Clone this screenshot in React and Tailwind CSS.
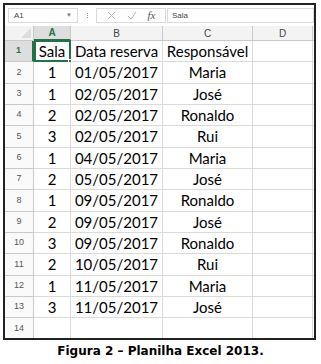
import React from 'react'

const rows = [
  ['Sala', 'Data reserva', 'Responsável'],
  ['1', '01/05/2017', 'Maria'],
  ['1', '02/05/2017', 'José'],
  ['2', '02/05/2017', 'Ronaldo'],
  ['3', '02/05/2017', 'Rui'],
  ['1', '04/05/2017', 'Maria'],
  ['2', '05/05/2017', 'José'],
  ['1', '09/05/2017', 'Ronaldo'],
  ['2', '09/05/2017', 'José'],
  ['3', '09/05/2017', 'Ronaldo'],
  ['2', '10/05/2017', 'Rui'],
  ['1', '11/05/2017', 'Maria'],
  ['3', '11/05/2017', 'José'],
  ['', '', ''],
]

const cellFont = { fontFamily: 'Lato, "Open Sans", sans-serif' }

function FormulaBar() {
  return (
    <div className="h-[21px] flex items-center shrink-0 text-[8px] text-[#444]" style={{ fontFamily: '"Liberation Sans", Arial, sans-serif' }}>
      <div className="ml-[3px] w-[70px] h-[15px] border border-[#dadada] flex items-center justify-between px-[5px]">
        <span>A1</span>
        <span className="text-[6px] text-[#777]">▼</span>
      </div>
      <div className="w-[18px] flex flex-col items-center gap-[1px]">
        <span className="w-[1px] h-[1px] bg-[#999]" />
        <span className="w-[1px] h-[1px] bg-[#999]" />
        <span className="w-[1px] h-[1px] bg-[#999]" />
      </div>
      <div className="w-[70px] h-[15px] border border-[#dadada] flex items-center justify-around px-[4px] text-[#b5b5b5]">
        <svg width="9" height="9" viewBox="0 0 9 9"><path d="M1 1L8 8M8 1L1 8" stroke="#b5b5b5" strokeWidth="1" /></svg>
        <svg width="10" height="9" viewBox="0 0 10 9"><path d="M1 5L4 8L9 1" stroke="#b5b5b5" strokeWidth="1" fill="none" /></svg>
        <span className="italic text-[11px] text-[#555]" style={{ fontFamily: '"Liberation Serif", serif' }}>fx</span>
      </div>
      <div className="ml-[1px] flex-1 h-[15px] border border-[#dadada] flex items-center px-[4px]">
        <span>Sala</span>
      </div>
    </div>
  )
}

export default function App() {
  const headerCell = 'h-[15px] border-r border-b border-[#c9c9c9] bg-[#f3f3f3] flex items-center justify-center text-[10px] text-[#444]'
  return (
    <div className="w-[321px] h-[364px] bg-white">
      <div className="ml-[3px] mt-[3px] w-[313px] h-[337px] border-2 border-[#222] overflow-hidden flex flex-col">
        <FormulaBar />
        <div className="grid grid-cols-[29px_37px_92px_90px_60px_1fr]" style={{ fontFamily: '"Liberation Sans", Arial, sans-serif' }}>
          <div className={headerCell + ' relative'}>
            <div className="absolute right-[2px] bottom-[2px] w-0 h-0 border-l-[10px] border-l-transparent border-b-[10px] border-b-[#dcdcdc]" />
          </div>
          <div className="h-[15px] border-r border-b-2 border-b-[#217346] border-r-[#c9c9c9] bg-[#dedede] flex items-center justify-center text-[10px] font-bold text-[#217346]">A</div>
          <div className={headerCell}>B</div>
          <div className={headerCell}>C</div>
          <div className={headerCell}>D</div>
          <div className="h-[15px] border-b border-[#c9c9c9] bg-[#f3f3f3]" />
          {rows.map((r, i) => {
            const first = i === 0
            return (
              <React.Fragment key={i}>
                <div className={'h-[21.33px] border-b flex items-center justify-center text-[9px] ' + (first ? 'bg-[#dedede] border-r-2 border-r-[#217346] border-b-[#c9c9c9] font-bold text-[#217346]' : 'bg-[#fafafa] border-r border-[#c9c9c9] text-[#555]')}>
                  {i + 1}
                </div>
                <div className="h-[21.33px] border-r border-b border-[#dadada] flex items-center justify-center text-[15px] text-black relative" style={cellFont}>
                  {first && (
                    <div className="absolute inset-[-1px] left-[0px] top-[-1px] border-2 border-[#217346]">
                      <div className="absolute right-[-3px] bottom-[-3px] w-[4px] h-[4px] bg-[#217346] border border-white" />
                    </div>
                  )}
                  {r[0]}
                </div>
                <div className="h-[21.33px] border-r border-b border-[#dadada] flex items-center justify-center text-[15px] text-black whitespace-nowrap" style={cellFont}>{r[1]}</div>
                <div className="h-[21.33px] border-r border-b border-[#dadada] flex items-center justify-center text-[15px] text-black" style={cellFont}>{r[2]}</div>
                <div className="h-[21.33px] border-r border-b border-[#dadada]" />
                <div className="h-[21.33px] border-b border-[#dadada]" />
              </React.Fragment>
            )
          })}
        </div>
      </div>
      <div className="mt-[2px] text-center text-[12px] font-bold text-black" style={{ fontFamily: '"DejaVu Sans", Verdana, sans-serif' }}>
        Figura 2 – Planilha Excel 2013.
      </div>
    </div>
  )
}
